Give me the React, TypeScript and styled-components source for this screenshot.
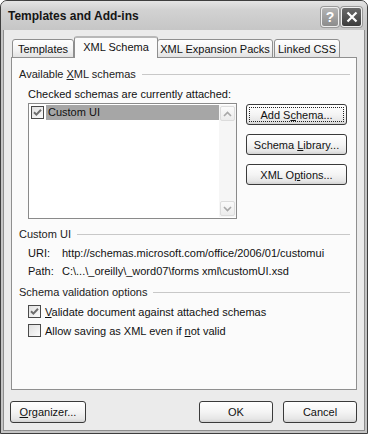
import * as React from 'react';
import styled, { createGlobalStyle } from 'styled-components';

const GlobalStyle = createGlobalStyle`
  html, body {
    margin: 0;
    padding: 0;
    background: #ffffff;
  }
  body {
    font-family: "Liberation Sans", Arial, sans-serif;
    font-size: 11px;
    color: #111;
  }
  * {
    box-sizing: border-box;
  }
`;

const Window = styled.div`
  width: 368px;
  height: 434px;
  border: 1px solid #3e3e3e;
  border-radius: 7px 7px 0 0;
  background: #c4c4c4;
  display: flex;
  flex-direction: column;
  overflow: hidden;
`;

const TitleBar = styled.div`
  height: 29px;
  flex-shrink: 0;
  display: flex;
  align-items: center;
  justify-content: space-between;
  padding: 0 5px 0 7px;
  background: linear-gradient(#e4e4e4 0%, #d2d2d2 30%, #c6c6c6 100%);
`;

const Title = styled.div`
  font-weight: bold;
  font-size: 12px;
  color: #151515;
  padding-top: 1px;
`;

const CaptionButtons = styled.div`
  display: flex;
  gap: 2px;
  padding-top: 2px;
`;

const CaptionButton = styled.div<{ $dark?: boolean; $w: number }>`
  width: ${(p) => p.$w}px;
  height: 20px;
  border: 1px solid ${(p) => (p.$dark ? '#f0f0f0' : '#efefef')};
  border-radius: 3px;
  background: ${(p) =>
    p.$dark
      ? 'linear-gradient(#6a6a6a, #3c3c3c)'
      : 'linear-gradient(#b4b4b4, #8c8c8c)'};
  color: #fff;
  font-weight: bold;
  font-size: 14px;
  display: flex;
  align-items: center;
  justify-content: center;
  box-shadow: 0 0 0 1px #9a9a9a;
`;

const Client = styled.div`
  flex: 1;
  margin: 0 2px 2px;
  border: 1px solid #8e8e8e;
  border-top: none;
  background: #ebebeb;
  padding: 6px 7px 0 7px;
  display: flex;
  flex-direction: column;
`;

const TabRow = styled.div`
  height: 22px;
  display: flex;
  align-items: flex-end;
  padding-left: 1px;
  position: relative;
  z-index: 1;
  margin-bottom: -1px;
`;

const Tab = styled.div<{ $active?: boolean; $w: number }>`
  width: ${(p) => p.$w}px;
  height: ${(p) => (p.$active ? 22 : 19)}px;
  margin-left: ${(p) => (p.$active ? -1 : 0)}px;
  margin-right: ${(p) => (p.$active ? -1 : 1)}px;
  display: flex;
  align-items: center;
  justify-content: center;
  border: 1px solid #8f8f8f;
  border-bottom: ${(p) => (p.$active ? 'none' : '1px solid #8f8f8f')};
  border-radius: 3px 3px 0 0;
  background: ${(p) =>
    p.$active ? '#fbfbfb' : 'linear-gradient(#ffffff, #f2f2f2 60%, #e2e2e2)'};
  border-top: ${(p) => (p.$active ? '2px solid #b8b8b8' : '1px solid #8f8f8f')};
  padding-bottom: ${(p) => (p.$active ? 2 : 0)}px;
  position: relative;
  z-index: ${(p) => (p.$active ? 2 : 0)};
`;

const Panel = styled.div`
  flex: 1;
  border: 1px solid #8f8f8f;
  background: #fbfbfb;
  padding: 9px 6px 0 7px;
  display: flex;
  flex-direction: column;
`;

const GroupHeader = styled.div<{ $gap?: number }>`
  display: flex;
  align-items: center;
  gap: 6px;
  height: 14px;
  margin-top: ${(p) => p.$gap ?? 0}px;
  color: #222;

  &::after {
    content: '';
    flex: 1;
    height: 1px;
    background: #c8c8c8;
  }
`;

const Indented = styled.div<{ $gap?: number }>`
  padding-left: 9px;
  margin-top: ${(p) => p.$gap ?? 0}px;
`;

const Label = styled.div`
  height: 14px;
  line-height: 14px;
`;

const ListArea = styled.div`
  display: flex;
  gap: 9px;
  margin-top: 2px;
`;

const ListBox = styled.div`
  width: 209px;
  height: 116px;
  border: 1px solid #8a8a8a;
  background: #fff;
  display: flex;
  padding: 1px 0 1px 2px;
`;

const ListItems = styled.div`
  flex: 1;
`;

const ListItem = styled.div`
  height: 15px;
  display: flex;
  align-items: center;
  gap: 2px;
`;

const ItemText = styled.div<{ $selected?: boolean }>`
  flex: 1;
  height: 15px;
  line-height: 15px;
  padding-left: 2px;
  background: ${(p) => (p.$selected ? '#a6a6a6' : 'transparent')};
`;

const ScrollBar = styled.div`
  width: 17px;
  display: flex;
  flex-direction: column;
  justify-content: space-between;
  background: #f6f6f6;
  padding: 1px;
`;

const ScrollArrow = styled.div`
  height: 15px;
  border: 1px solid #dcdcdc;
  border-radius: 2px;
  background: linear-gradient(#fafafa, #ececec);
  display: flex;
  align-items: center;
  justify-content: center;
`;

const ButtonColumn = styled.div`
  display: flex;
  flex-direction: column;
  gap: 9px;
  padding-top: 1px;
`;

const Button = styled.div<{ $w: number; $h?: number; $focus?: boolean }>`
  width: ${(p) => p.$w}px;
  height: ${(p) => p.$h ?? 21}px;
  border: 1px solid #3a3a3a;
  border-radius: 3px;
  background: linear-gradient(#ffffff 0%, #f4f4f4 50%, #e6e6e6 85%, #d2d2d2 100%);
  display: flex;
  align-items: center;
  justify-content: center;
  color: #111;
  outline: ${(p) => (p.$focus ? '1px dotted #222' : 'none')};
  outline-offset: -4px;
`;

const InfoRow = styled.div`
  display: flex;
  height: 18px;
  line-height: 18px;
`;

const InfoKey = styled.div`
  width: 34px;
`;

const CheckRow = styled.div<{ $gap?: number }>`
  display: flex;
  align-items: center;
  gap: 4px;
  height: 13px;
  margin-top: ${(p) => p.$gap ?? 0}px;
`;

const Box = styled.div`
  width: 13px;
  height: 13px;
  border: 1px solid #4a4a4a;
  background: linear-gradient(135deg, #e0e0e0, #fbfbfb);
  display: flex;
  align-items: center;
  justify-content: center;
`;

const Footer = styled.div`
  display: flex;
  align-items: center;
  padding: 11px 0 7px;
  margin-left: -1px;
`;

const Spacer = styled.div`
  flex: 1;
`;

const FooterRight = styled.div`
  display: flex;
  gap: 10px;
`;

const CheckBox = ({ checked }: { checked?: boolean }) => (
  <Box>
    {checked && (
      <svg width="9" height="9" viewBox="0 0 9 9">
        <path d="M1 4.2 L3.4 6.6 L8 1.8" fill="none" stroke="#6e6e6e" strokeWidth="2" />
      </svg>
    )}
  </Box>
);

const Chevron = ({ down }: { down?: boolean }) => (
  <svg width="9" height="6" viewBox="0 0 9 6">
    <path
      d={down ? 'M1 1 L4.5 4.5 L8 1' : 'M1 5 L4.5 1.5 L8 5'}
      fill="none"
      stroke="#a8a8a8"
      strokeWidth="1.6"
    />
  </svg>
);

const App = () => (
  <>
    <GlobalStyle />
    <Window>
      <TitleBar>
        <Title>Templates and Add-ins</Title>
        <CaptionButtons>
          <CaptionButton $w={18}>?</CaptionButton>
          <CaptionButton $w={21} $dark>
            <svg width="12" height="12" viewBox="0 0 12 12">
              <path d="M1.5 1.5 L10.5 10.5 M10.5 1.5 L1.5 10.5" stroke="#fff" strokeWidth="2.2" />
            </svg>
          </CaptionButton>
        </CaptionButtons>
      </TitleBar>
      <Client>
        <TabRow>
          <Tab $w={62}>Templates</Tab>
          <Tab $w={84} $active>
            XML Schema
          </Tab>
          <Tab $w={116}>XML Expansion Packs</Tab>
          <Tab $w={66}>Linked CSS</Tab>
        </TabRow>
        <Panel>
          <GroupHeader>
            <span>
              Available <u>X</u>ML schemas
            </span>
          </GroupHeader>
          <Indented $gap={6}>
            <Label>Checked schemas are currently attached:</Label>
            <ListArea>
              <ListBox>
                <ListItems>
                  <ListItem>
                    <CheckBox checked />
                    <ItemText $selected>Custom UI</ItemText>
                  </ListItem>
                </ListItems>
                <ScrollBar>
                  <ScrollArrow>
                    <Chevron />
                  </ScrollArrow>
                  <ScrollArrow>
                    <Chevron down />
                  </ScrollArrow>
                </ScrollBar>
              </ListBox>
              <ButtonColumn>
                <Button $w={101} $focus>
                  <span>
                    Add S<u>c</u>hema...
                  </span>
                </Button>
                <Button $w={101}>
                  <span>
                    Schema <u>L</u>ibrary...
                  </span>
                </Button>
                <Button $w={101}>
                  <span>
                    XML O<u>p</u>tions...
                  </span>
                </Button>
              </ButtonColumn>
            </ListArea>
          </Indented>
          <GroupHeader $gap={8}>
            <span>Custom UI</span>
          </GroupHeader>
          <Indented $gap={3}>
            <InfoRow>
              <InfoKey>URI:</InfoKey>
              <div>http://schemas.microsoft.com/office/2006/01/customui</div>
            </InfoRow>
            <InfoRow>
              <InfoKey>Path:</InfoKey>
              <div>C:\...\_oreilly\_word07\forms xml\customUI.xsd</div>
            </InfoRow>
          </Indented>
          <GroupHeader $gap={5}>
            <span>Schema validation options</span>
          </GroupHeader>
          <Indented $gap={6}>
            <CheckRow>
              <CheckBox checked />
              <span>
                <u>V</u>alidate document against attached schemas
              </span>
            </CheckRow>
            <CheckRow $gap={6}>
              <CheckBox />
              <span>
                Allow saving as XML even if <u>n</u>ot valid
              </span>
            </CheckRow>
          </Indented>
        </Panel>
        <Footer>
          <Button $w={76} $h={22}>
            <span>
              <u>O</u>rganizer...
            </span>
          </Button>
          <Spacer />
          <FooterRight>
            <Button $w={74} $h={22}>
              OK
            </Button>
            <Button $w={74} $h={22}>
              Cancel
            </Button>
          </FooterRight>
        </Footer>
      </Client>
    </Window>
  </>
);

export default App;
